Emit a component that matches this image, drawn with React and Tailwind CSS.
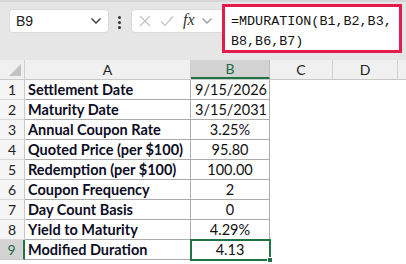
const rows = [
  ["Settlement Date", "9/15/2026", "right"],
  ["Maturity Date", "3/15/2031", "right"],
  ["Annual Coupon Rate", "3.25%", "center"],
  ["Quoted Price (per $100)", "95.80", "center"],
  ["Redemption (per $100)", "100.00", "center"],
  ["Coupon Frequency", "2", "center"],
  ["Day Count Basis", "0", "center"],
  ["Yield to Maturity", "4.29%", "center"],
  ["Modified Duration", "4.13", "center"],
];

function Chevron({ className }) {
  return (
    <svg width="12" height="8" viewBox="0 0 12 8" className={className}>
      <path d="M1.5 1.5 L6 6 L10.5 1.5" fill="none" stroke="currentColor" strokeWidth="1.3" />
    </svg>
  );
}

export default function App() {
  return (
    <div
      className="w-[406px] h-[264px] overflow-hidden bg-[#e6e6e6] text-[#111]"
      style={{ fontFamily: "Lato, 'Liberation Sans', sans-serif" }}
    >
      {/* formula bar */}
      <div className="h-[60px] border-t-2 border-[#d6d6d6] flex items-start">
        <div className="ml-[9px] mt-[7px] w-[100px] h-[24px] bg-white rounded-[4px] border border-[#dcdcdc] flex items-center justify-between pl-[6px] pr-[6px]">
          <span className="text-[14px] font-[Liberation_Sans] text-[#222]">B9</span>
          <Chevron className="text-[#333]" />
        </div>
        <div className="ml-[9px] mt-[14px] flex flex-col gap-[2px]">
          <span className="w-[3px] h-[3px] bg-[#333] rounded-full" />
          <span className="w-[3px] h-[3px] bg-[#333] rounded-full" />
          <span className="w-[3px] h-[3px] bg-[#333] rounded-full" />
        </div>
        <div className="ml-[10px] mt-[7px] w-[95px] h-[24px] bg-white rounded-l-[4px] border border-[#dcdcdc] flex items-center pl-[7px] gap-[9px]">
          <svg width="12" height="12" viewBox="0 0 12 12">
            <path d="M1 1 L11 11 M11 1 L1 11" stroke="#c4c4c4" strokeWidth="1.2" />
          </svg>
          <svg width="14" height="12" viewBox="0 0 14 12">
            <path d="M1 6.5 L5 10.5 L13 1.5" fill="none" stroke="#c4c4c4" strokeWidth="1.2" />
          </svg>
          <span className="italic text-[16px] text-[#333] -mt-[2px]" style={{ fontFamily: "'Liberation Serif', serif" }}>
            fx
          </span>
          <Chevron className="text-[#999] -ml-[3px]" />
        </div>
        <div
          className="-ml-[4px] mt-[2px] w-[180px] h-[49px] bg-white border-[3px] border-[#e31c4b] px-[6px] pt-[5px] text-[13.4px] leading-[20px] text-[#111]"
          style={{ fontFamily: "'Liberation Mono', monospace" }}
        >
          <div>=MDURATION(B1,B2,B3,</div>
          <div>B8,B6,B7)</div>
        </div>
      </div>

      {/* sheet */}
      <div className="bg-white h-[204px]">
        {/* column headers */}
        <div className="flex h-[20px] bg-[#f0f0f0] border-b border-[#c8c8c8] text-[14px] text-[#222]">
          <div className="w-[25px] border-r border-[#d0d0d0] relative">
            <svg width="12" height="12" viewBox="0 0 12 12" className="absolute right-[3px] bottom-[3px]">
              <path d="M12 0 L12 12 L0 12 Z" fill="#c2c2c2" />
            </svg>
          </div>
          <div className="w-[166px] border-r border-[#d0d0d0] flex items-center justify-center">A</div>
          <div className="w-[79px] bg-[#d3d3d3] border-r border-[#c0c0c0] border-b-2 border-b-[#217346] flex items-center justify-center text-[#1d6b41]">
            B
          </div>
          <div className="w-[63px] border-r border-[#d0d0d0] flex items-center justify-center">C</div>
          <div className="w-[65px] border-r border-[#d0d0d0] flex items-center justify-center">D</div>
          <div className="flex-1" />
        </div>

        {rows.map(([label, value, align], i) => {
          const selected = i === rows.length - 1;
          return (
            <div key={i} className="flex h-[20px] text-[14.5px]">
              <div
                className={
                  selected
                    ? "w-[25px] bg-[#d3d3d3] border-r-2 border-[#217346] border-b border-b-[#c8c8c8] flex items-center justify-center text-[14px] text-[#1d6b41]"
                    : "w-[25px] bg-[#f5f5f5] border-r border-[#c8c8c8] border-b border-b-[#dadada] flex items-center justify-center text-[14px] text-[#222]"
                }
              >
                {i + 1}
              </div>
              <div className="w-[166px] border-r border-b border-[#acacac] flex items-center pl-[3px] font-bold text-[#0c0c24]">
                {label}
              </div>
              <div
                className={
                  "w-[79px] border-r border-b border-[#acacac] flex items-center relative " +
                  (align === "right" ? "justify-end pr-[2px]" : "justify-center")
                }
              >
                {value}
                {selected && (
                  <>
                    <div className="absolute -left-[1px] -top-[1px] w-[81px] h-[22px] border-2 border-[#217346]" />
                    <div className="absolute -right-[4px] -bottom-[4px] w-[6px] h-[6px] bg-[#217346] border border-white" />
                  </>
                )}
              </div>
              <div className="flex-1" />
            </div>
          );
        })}
      </div>
    </div>
  );
}
